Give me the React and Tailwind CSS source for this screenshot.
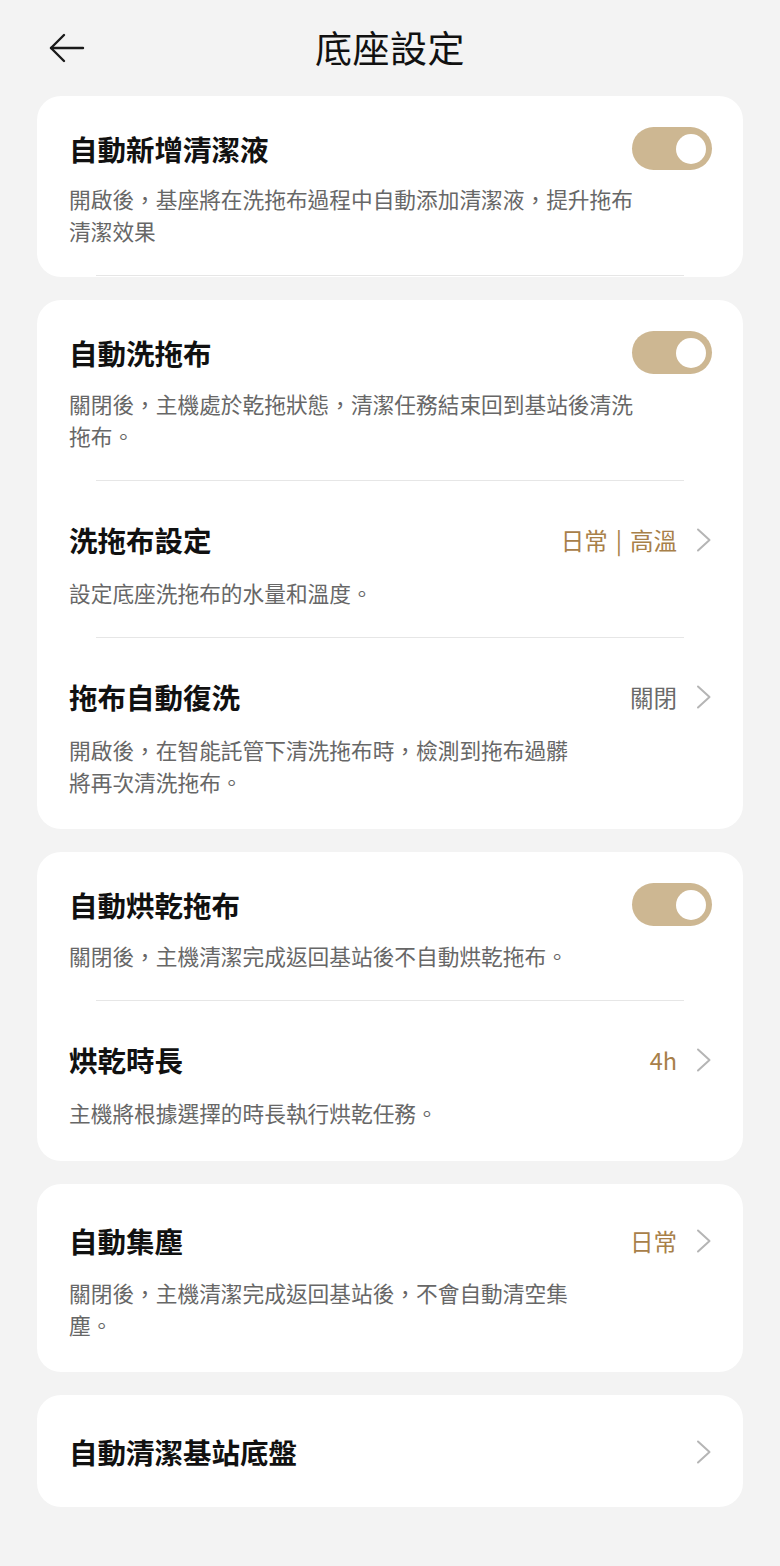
const FONT = { fontFamily: '"Noto Sans CJK TC", "Noto Sans", sans-serif' }

function BackArrow() {
  return (
    <svg width="36" height="30" viewBox="0 0 36 30" fill="none" stroke="#1a1a1a" strokeWidth="2.4" strokeLinecap="round" strokeLinejoin="round">
      <path d="M34 15H2" />
      <path d="M15 2L2 15l13 13" />
    </svg>
  )
}

function Chevron() {
  return (
    <svg width="16" height="24" viewBox="0 0 16 24" fill="none" stroke="#b5b5b5" strokeWidth="2" strokeLinecap="round" strokeLinejoin="round">
      <path d="M2 1.5L13.5 12 2 22.5" />
    </svg>
  )
}

function Toggle() {
  return (
    <div className="w-[80px] h-[43px] rounded-full bg-[#cdb792] flex items-center justify-end pr-[6px]">
      <div className="w-[30px] h-[30px] rounded-full bg-white" />
    </div>
  )
}

function Divider() {
  return <div className="mx-[59px] h-px bg-[#e6e6e6]" />
}

function Row({ title, lines, toggle, value, valueGold, pt, pb, gap }) {
  return (
    <div className={`pr-[31px] pl-[32px] ${pt} ${pb}`}>
      <div className="flex items-center justify-between">
        <span className="text-[28.5px] leading-[40px] font-semibold text-[#111]">{title}</span>
        {toggle ? (
          <Toggle />
        ) : (
          <div className="flex items-center gap-[19px]">
            {value && (
              <span className={`text-[23.5px] leading-[32px] ${valueGold ? 'text-[#a88049]' : 'text-[#6a6a6a]'}`}>
                {value}
              </span>
            )}
            <Chevron />
          </div>
        )}
      </div>
      {lines && (
        <div className={`${gap} text-[21.7px] leading-[32px] text-[#676767]`}>
          {lines.map(l => (
            <div key={l} className="whitespace-nowrap">{l}</div>
          ))}
        </div>
      )}
    </div>
  )
}

export default function App() {
  return (
    <div className="min-h-[1566px] bg-[#f3f3f3] px-[37px]" style={FONT}>
      <header className="h-[96px] flex items-center relative">
        <div className="absolute left-[12px] top-[33px]">
          <BackArrow />
        </div>
        <h1 className="w-full text-center text-[37px] font-normal text-[#111] tracking-[0.5px]">底座設定</h1>
      </header>

      <div className="flex flex-col gap-[23px]">
        <section className="bg-white rounded-[24px] pb-px">
          <Row
            title="自動新增清潔液"
            toggle
            lines={['開啟後，基座將在洗拖布過程中自動添加清潔液，提升拖布', '清潔效果']}
            pt="pt-[31px]"
            pb="pb-[28px]"
            gap="mt-[13px]"
          />
          <Divider />
        </section>

        <section className="bg-white rounded-[24px]">
          <Row
            title="自動洗拖布"
            toggle
            lines={['關閉後，主機處於乾拖狀態，清潔任務結束回到基站後清洗', '拖布。']}
            pt="pt-[31px]"
            pb="pb-[28px]"
            gap="mt-[14px]"
          />
          <Divider />
          <Row
            title="洗拖布設定"
            value={
              <span className="flex items-center">
                日常<span className="mx-[8px]">|</span>高溫
              </span>
            }
            valueGold
            lines={['設定底座洗拖布的水量和溫度。']}
            pt="pt-[39px]"
            pb="pb-[28px]"
            gap="mt-[17px]"
          />
          <Divider />
          <Row
            title="拖布自動復洗"
            value="關閉"
            lines={['開啟後，在智能託管下清洗拖布時，檢測到拖布過髒', '將再次清洗拖布。']}
            pt="pt-[39px]"
            pb="pb-[31px]"
            gap="mt-[17px]"
          />
        </section>

        <section className="bg-white rounded-[24px]">
          <Row
            title="自動烘乾拖布"
            toggle
            lines={['關閉後，主機清潔完成返回基站後不自動烘乾拖布。']}
            pt="pt-[31px]"
            pb="pb-[28px]"
            gap="mt-[14px]"
          />
          <Divider />
          <Row
            title="烘乾時長"
            value="4h"
            valueGold
            lines={['主機將根據選擇的時長執行烘乾任務。']}
            pt="pt-[39px]"
            pb="pb-[32px]"
            gap="mt-[17px]"
          />
        </section>

        <section className="bg-white rounded-[24px]">
          <Row
            title="自動集塵"
            value="日常"
            valueGold
            lines={['關閉後，主機清潔完成返回基站後，不會自動清空集', '塵。']}
            pt="pt-[37px]"
            pb="pb-[31px]"
            gap="mt-[16px]"
          />
        </section>

        <section className="bg-white rounded-[24px]">
          <Row title="自動清潔基站底盤" pt="pt-[37px]" pb="pb-[35px]" />
        </section>
      </div>
    </div>
  )
}
